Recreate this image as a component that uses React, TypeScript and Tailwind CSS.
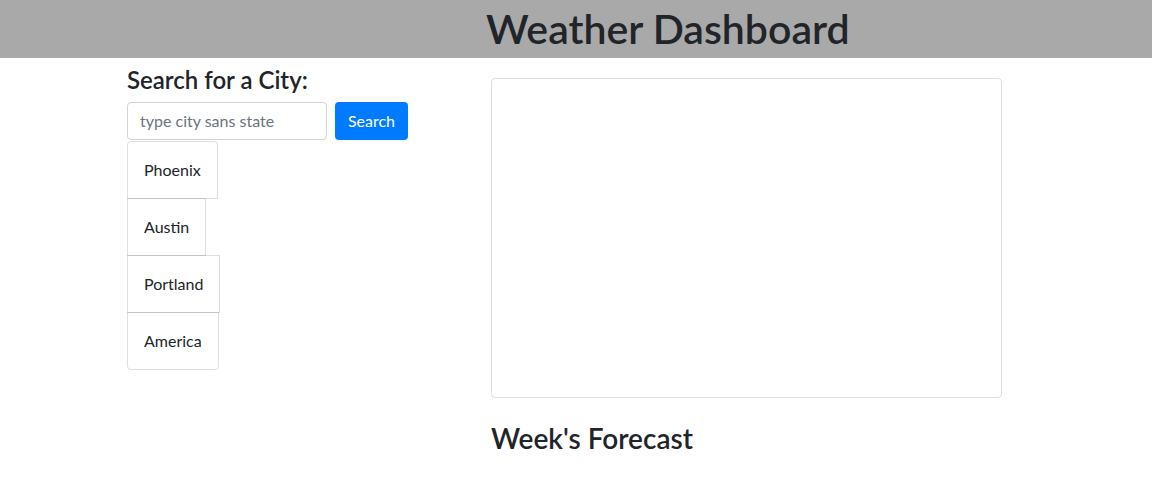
import React from "react";

const cities = ["Phoenix", "Austin", "Portland", "America"];

export default function App() {
  return (
    <div className="min-h-[487px] bg-white text-[#212529]" style={{ fontFamily: '"Lato", "Noto Sans", sans-serif' }}>
      <header className="h-[58px] bg-[#a9a9a9] pl-[486px] flex items-center">
        <h1 className="text-[41px] leading-[1.2] font-semibold m-0">Weather Dashboard</h1>
      </header>
      <main className="flex pl-[127px]">
        <section className="w-[364px] pt-[8px] flex flex-col items-start">
          <h4 className="text-[24px] leading-[1.2] font-semibold mb-[7px]">Search for a City:</h4>
          <div className="flex gap-[8px]">
            <input
              type="text"
              placeholder="type city sans state"
              className="w-[200px] h-[38px] border border-[#ced4da] rounded-[4px] px-[12px] text-[16px] placeholder:text-[#6c757d] outline-none"
            />
            <button className="h-[38px] w-[73px] bg-[#007bff] text-white rounded-[4px] text-[16px]">Search</button>
          </div>
          <ul className="mt-[1px] flex flex-col items-start">
            {cities.map((c, i) => (
              <li
                key={c}
                className={`border border-[rgba(0,0,0,0.125)] px-[16px] h-[58px] flex items-center text-[16px] -mt-px first:mt-0 ${
                  i === 0 ? "rounded-t-[4px]" : ""
                } ${i === cities.length - 1 ? "rounded-b-[4px]" : ""}`}
              >
                {c}
              </li>
            ))}
          </ul>
        </section>
        <section className="w-[511px] pt-[20px]">
          <div className="h-[320px] border border-[rgba(0,0,0,0.125)] rounded-[4px]"></div>
          <h3 className="mt-[24px] text-[28px] leading-[1.2] font-semibold">Week's Forecast</h3>
        </section>
      </main>
    </div>
  );
}
